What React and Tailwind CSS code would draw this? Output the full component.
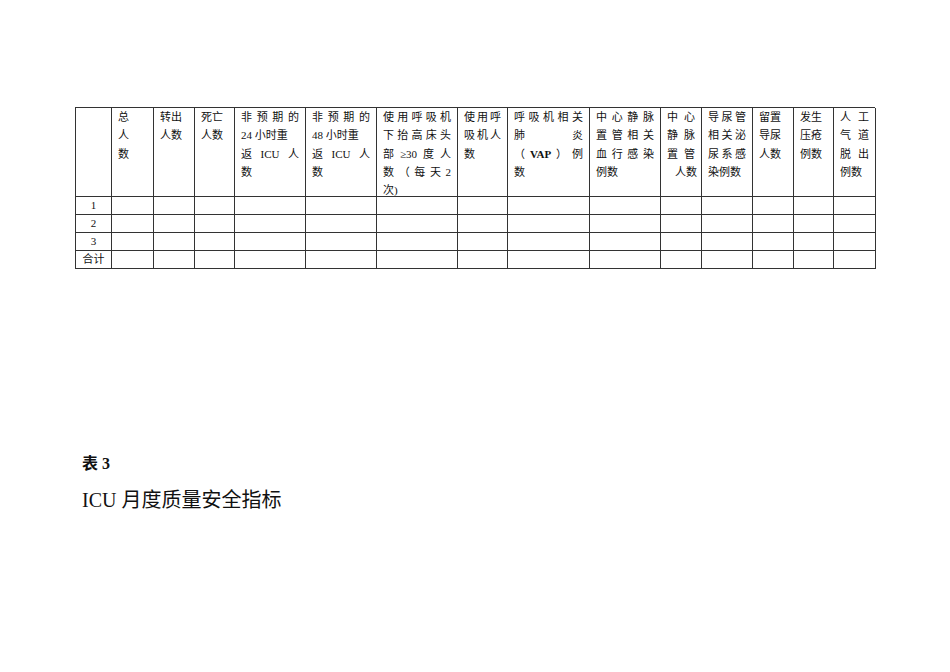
import React from 'react';

const J = (...tokens) => ({ j: tokens });

// column widths (px) incl. right border
const widths = [36, 42, 41, 40, 71, 71, 81, 50, 82, 71, 41, 51, 41, 40, 42];

const header = [
  [],
  ['总', '人', '数'],
  ['转出', '人数'],
  ['死亡', '人数'],
  [J('非', '预', '期', '的'), '24 小时重', J('返', 'ICU', '人'), '数'],
  [J('非', '预', '期', '的'), '48 小时重', J('返', 'ICU', '人'), '数'],
  [J('使', '用', '呼', '吸', '机'), J('下', '抬', '高', '床', '头'), J('部', '≥30', '度', '人'), J('数', '（', '每', '天', '2'), '次)'],
  [J('使', '用', '呼'), J('吸', '机', '人'), '数'],
  [J('呼', '吸', '机', '相', '关'), J('肺', '炎'), J('（', 'VAP', '）', '例'), '数'],
  [J('中', '心', '静', '脉'), J('置', '管', '相', '关'), J('血', '行', '感', '染'), '例数'],
  [J('中', '心'), J('静', '脉'), J('置', '管'), { indent: '人数' }],
  [J('导', '尿', '管'), J('相', '关', '泌'), J('尿', '系', '感'), '染例数'],
  ['留置', '导尿', '人数'],
  ['发生', '压疮', '例数'],
  [J('人', '工'), J('气', '道'), J('脱', '出'), '例数'],
];

const rows = ['1', '2', '3', '合计'];

const Line = ({ line }) => {
  if (typeof line === 'string') return <div className="whitespace-nowrap">{line}</div>;
  if (line.indent) return <div className="whitespace-nowrap pl-[8px]">{line.indent}</div>;
  return (
    <div className="flex justify-between whitespace-nowrap">
      {line.j.map((t, i) => (
        <span key={i} className={t === 'VAP' ? 'font-bold' : ''}>{t}</span>
      ))}
    </div>
  );
};

const App = () => {
  return (
    <div
      className="w-[950px] h-[672px] bg-white text-[#111] overflow-hidden"
      style={{ fontFamily: '"Liberation Serif", "Noto Sans CJK SC", serif' }}
    >
      <div className="pl-[75px] pt-[107px]">
        {/* 表格 */}
        <div
          className="grid w-[800px] border-l border-t border-[#333] text-[11px] leading-[18.3px]"
          style={{ gridTemplateColumns: widths.map((w) => `${w}px`).join(' '), gridTemplateRows: '89px 18px 18px 18px 18px' }}
        >
          {header.map((lines, ci) => (
            <div key={ci} className="border-r border-b border-[#333] px-[6px]">
              {lines.map((l, li) => (
                <Line key={li} line={l} />
              ))}
            </div>
          ))}
          {rows.map((r) =>
            widths.map((w, ci) => (
              <div key={r + ci} className="border-r border-b border-[#333] flex items-center justify-center leading-none">
                {ci === 0 ? r : ''}
              </div>
            ))
          )}
        </div>

        {/* 标题 */}
        <div className="ml-[7px] mt-[183px]">
          <div className="text-[16px] leading-[24px] font-bold">表 3</div>
          <div className="mt-[10px] text-[20px] leading-[28px]">ICU 月度质量安全指标</div>
        </div>
      </div>
    </div>
  );
};

export default App;
